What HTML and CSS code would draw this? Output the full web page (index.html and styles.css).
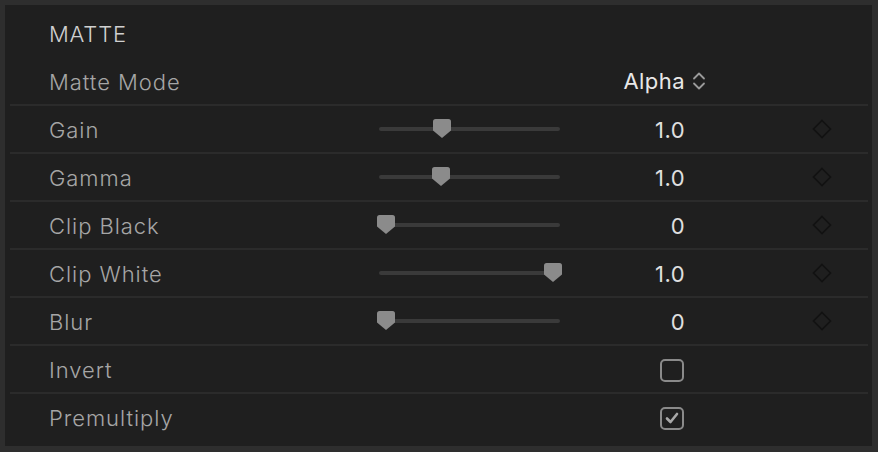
FILE: index.html
```html
<!DOCTYPE html>
<html>
<head>
<meta charset="utf-8">
<link rel="stylesheet" href="styles.css">
</head>
<body>
<div class="panel">
  <div class="row head"><span class="title">MATTE</span></div>
  <div class="row first">
    <span class="label">Matte Mode</span>
    <span></span>
    <span class="popup">Alpha
      <svg class="chev" width="16" height="20" viewBox="0 0 16 20"><path d="M3 7.5 L8 2.5 L13 7.5 M3 12.5 L8 17.5 L13 12.5" fill="none" stroke="#9a9a9a" stroke-width="1.8" stroke-linecap="round" stroke-linejoin="round"/></svg>
    </span>
  </div>
  <div class="row">
    <span class="label">Gain</span>
    <div class="slider"><div class="track"></div><svg class="thumb" style="left:54px" width="18" height="19" viewBox="0 0 18 19"><path d="M2.5 0 H15.5 Q18 0 18 2.5 V11.5 L9 19 L0 11.5 V2.5 Q0 0 2.5 0 Z" fill="#8b8b8b"/></svg></div>
    <span class="value">1.0</span>
    <span class="kf"><svg width="20" height="20" viewBox="0 0 20 20"><path d="M10 1.5 L18.5 10 L10 18.5 L1.5 10 Z" fill="none" stroke="#121212" stroke-width="1.6"/></svg></span>
  </div>
  <div class="row">
    <span class="label">Gamma</span>
    <div class="slider"><div class="track"></div><svg class="thumb" style="left:53px" width="18" height="19" viewBox="0 0 18 19"><path d="M2.5 0 H15.5 Q18 0 18 2.5 V11.5 L9 19 L0 11.5 V2.5 Q0 0 2.5 0 Z" fill="#8b8b8b"/></svg></div>
    <span class="value">1.0</span>
    <span class="kf"><svg width="20" height="20" viewBox="0 0 20 20"><path d="M10 1.5 L18.5 10 L10 18.5 L1.5 10 Z" fill="none" stroke="#121212" stroke-width="1.6"/></svg></span>
  </div>
  <div class="row">
    <span class="label">Clip Black</span>
    <div class="slider"><div class="track"></div><svg class="thumb" style="left:-2px" width="18" height="19" viewBox="0 0 18 19"><path d="M2.5 0 H15.5 Q18 0 18 2.5 V11.5 L9 19 L0 11.5 V2.5 Q0 0 2.5 0 Z" fill="#8b8b8b"/></svg></div>
    <span class="value">0</span>
    <span class="kf"><svg width="20" height="20" viewBox="0 0 20 20"><path d="M10 1.5 L18.5 10 L10 18.5 L1.5 10 Z" fill="none" stroke="#121212" stroke-width="1.6"/></svg></span>
  </div>
  <div class="row">
    <span class="label">Clip White</span>
    <div class="slider"><div class="track"></div><svg class="thumb" style="left:165px" width="18" height="19" viewBox="0 0 18 19"><path d="M2.5 0 H15.5 Q18 0 18 2.5 V11.5 L9 19 L0 11.5 V2.5 Q0 0 2.5 0 Z" fill="#8b8b8b"/></svg></div>
    <span class="value">1.0</span>
    <span class="kf"><svg width="20" height="20" viewBox="0 0 20 20"><path d="M10 1.5 L18.5 10 L10 18.5 L1.5 10 Z" fill="none" stroke="#121212" stroke-width="1.6"/></svg></span>
  </div>
  <div class="row">
    <span class="label">Blur</span>
    <div class="slider"><div class="track"></div><svg class="thumb" style="left:-2px" width="18" height="19" viewBox="0 0 18 19"><path d="M2.5 0 H15.5 Q18 0 18 2.5 V11.5 L9 19 L0 11.5 V2.5 Q0 0 2.5 0 Z" fill="#8b8b8b"/></svg></div>
    <span class="value">0</span>
    <span class="kf"><svg width="20" height="20" viewBox="0 0 20 20"><path d="M10 1.5 L18.5 10 L10 18.5 L1.5 10 Z" fill="none" stroke="#121212" stroke-width="1.6"/></svg></span>
  </div>
  <div class="row">
    <span class="label">Invert</span>
    <span></span>
    <span class="value"><span class="check"></span></span>
  </div>
  <div class="row">
    <span class="label">Premultiply</span>
    <span></span>
    <span class="value"><span class="check"><svg width="20" height="20" viewBox="0 0 20 20"><path d="M5 10.5 L8.5 14 L15 6" fill="none" stroke="#a8a8a8" stroke-width="2.6" stroke-linecap="round" stroke-linejoin="round"/></svg></span></span>
  </div>
</div>
</body>
</html>
```

FILE: styles.css
```css
html, body {
  margin: 0;
  padding: 0;
}
body {
  background: #2e2e2e;
  width: 878px;
  height: 452px;
  padding: 5px 6px 6px 5px;
  box-sizing: border-box;
  font-family: Inter, "Open Sans", "Liberation Sans", sans-serif;
}
.panel {
  background: #1f1f1f;
  height: 441px;
  box-sizing: border-box;
  padding: 3px 4px 0 5px;
}
.row {
  display: grid;
  grid-template-columns: 330px 181px 125px 1fr;
  align-items: center;
  height: 48px;
  box-sizing: border-box;
  border-top: 2px solid #2b2b2b;
  padding-left: 39px;
}
.row.head, .row.first {
  border-top: none;
}
.row.first .label {
  padding-top: 4px;
}
.label, .title, .popup, .value {
  font-size: 22px;
  font-weight: 300;
  letter-spacing: 0.45px;
}
.label {
  color: #a6a6a6;
  letter-spacing: 0.95px;
  padding-top: 2px;
}
.title {
  color: #d0d0d0;
  padding-top: 4px;
  letter-spacing: 0.8px;
  display: block;
}
.popup {
  display: flex;
  align-items: center;
  justify-content: flex-end;
  gap: 6px;
  margin-right: -22px;
  color: #e8e8e8;
  font-weight: 400;
  padding-top: 2px;
}
.chev {
  display: block;
}
.slider {
  position: relative;
  height: 20px;
}
.track {
  position: absolute;
  left: 0;
  right: 0;
  top: 8px;
  height: 4px;
  border-radius: 2px;
  background: #3a3a3a;
}
.thumb {
  position: absolute;
  top: 0;
  display: block;
}
.value {
  color: #e0e0e0;
  font-weight: 400;
  text-align: right;
  display: flex;
  justify-content: flex-end;
  padding-top: 2px;
}
.kf {
  padding-left: 127px;
  display: flex;
}
.kf svg {
  display: block;
}
.check {
  width: 24px;
  height: 23px;
  box-sizing: border-box;
  border: 2px solid #8a8a8a;
  border-radius: 5px;
  display: flex;
  align-items: center;
  justify-content: center;
  margin-right: 1px;
}
.check svg {
  display: block;
}
```
